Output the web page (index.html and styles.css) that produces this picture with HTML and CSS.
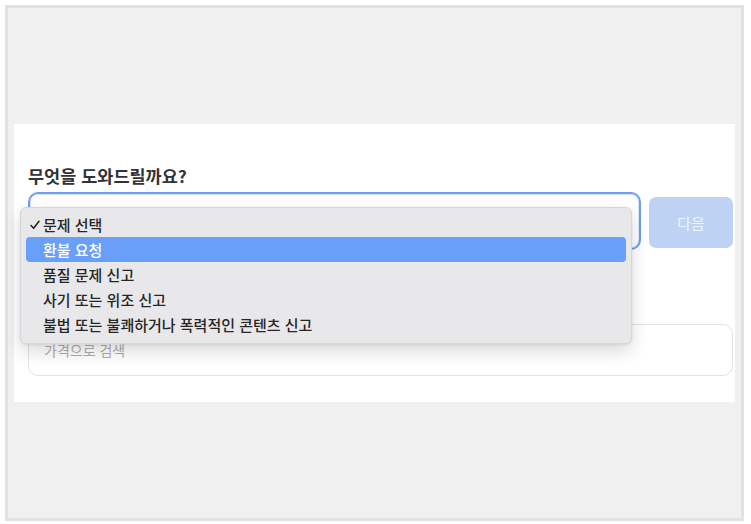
FILE: index.html
```html
<!DOCTYPE html>
<html lang="ko">
<head>
<meta charset="utf-8">
<title>문의</title>
<link rel="stylesheet" href="styles.css">
</head>
<body>
<div class="frame">
  <section class="panel">
    <h2 class="title">무엇을 도와드릴까요?</h2>
    <div class="row">
      <div class="select-wrap">
        <div class="select"></div>
        <ul class="menu">
          <li class="item checked"><svg class="check" width="10" height="10" viewBox="0 0 10 10"><polyline points="1,5.5 3.6,8.3 9,1.3" fill="none" stroke="#222" stroke-width="1.5" stroke-linecap="round" stroke-linejoin="round"/></svg>문제 선택</li>
          <li class="item active">환불 요청</li>
          <li class="item">품질 문제 신고</li>
          <li class="item">사기 또는 위조 신고</li>
          <li class="item">불법 또는 불쾌하거나 폭력적인 콘텐츠 신고</li>
        </ul>
      </div>
      <button class="next">다음</button>
    </div>
    <div class="search">가격으로 검색</div>
  </section>
</div>
</body>
</html>
```

FILE: styles.css
```css
html, body {
  margin: 0;
  padding: 0;
  background: #ffffff;
}
body {
  font-family: "Noto Sans CJK KR", "Noto Sans", sans-serif;
  color: #222;
}
.frame {
  box-sizing: border-box;
  margin: 5px 0 0 5px;
  width: 739px;
  height: 516px;
  border: 3px solid #e2e2e2;
  background: #f0f0f0;
  padding-top: 116px;
}
.panel {
  box-sizing: border-box;
  margin: 0 6px;
  height: 278px;
  background: #ffffff;
  padding: 40px 2px 0 14px;
}
.title {
  margin: 0;
  font-size: 17.5px;
  line-height: 24px;
  font-weight: 700;
  color: #333;
}
.row {
  display: flex;
  align-items: flex-end;
  gap: 8px;
  margin-top: 4px;
}
.select-wrap {
  position: relative;
  flex: 1;
}
.select {
  box-sizing: border-box;
  height: 58px;
  border: 2.5px solid #6f9df0;
  border-radius: 10px;
  background: #fff;
  box-shadow: inset 0 0 0 1px #dbe6fb;
}
.menu {
  position: absolute;
  left: -8px;
  top: 15px;
  width: 612px;
  box-sizing: border-box;
  margin: 0;
  padding: 4px 5px 6px 5px;
  list-style: none;
  background: #e8e8ea;
  border: 1px solid #d6d6d8;
  border-radius: 6px;
  box-shadow: 0 8px 18px rgba(0,0,0,0.14), 0 1px 3px rgba(0,0,0,0.08);
}
.item {
  position: relative;
  height: 25px;
  line-height: 25px;
  padding-left: 17px;
  font-size: 15px;
  font-weight: 500;
  color: #262626;
  border-radius: 4px;
  white-space: nowrap;
}
.item .check {
  position: absolute;
  left: 4px;
  top: 8px;
}
.item.active {
  background: #689ff8;
  color: #ffffff;
}
.next {
  width: 84px;
  height: 51px;
  margin-bottom: 2px;
  border: none;
  border-radius: 7px;
  background: #bed3f4;
  color: #eef3fd;
  font-family: inherit;
  font-size: 15px;
  padding: 0;
}
.search {
  box-sizing: border-box;
  margin-top: 74px;
  height: 52px;
  border: 1px solid #e2e2e2;
  border-radius: 10px;
  padding-left: 15px;
  line-height: 50px;
  font-size: 14px;
  color: #adadad;
}
```
